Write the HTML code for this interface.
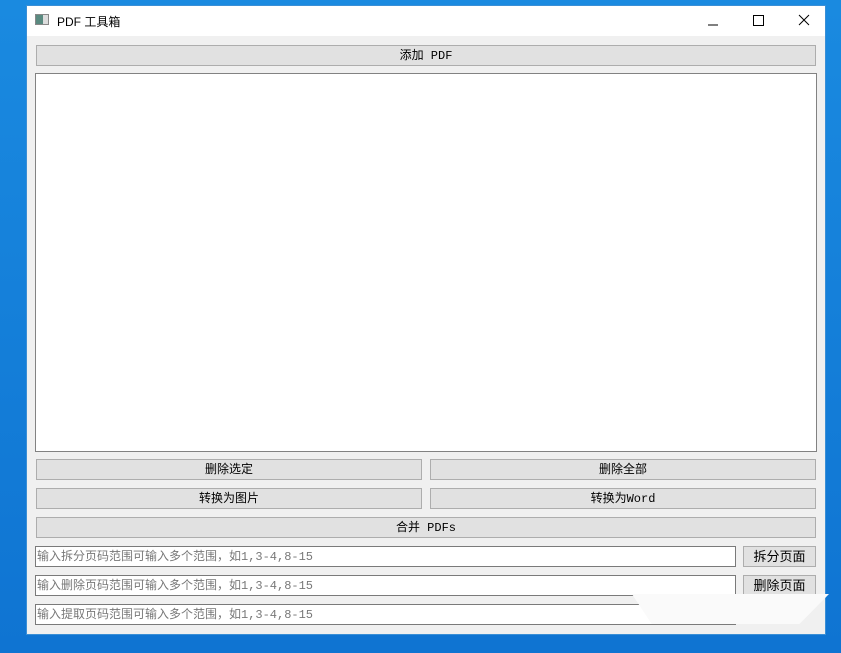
<!DOCTYPE html>
<html><head><meta charset="utf-8"><style>
*{box-sizing:border-box;margin:0;padding:0}
body{width:841px;height:653px;overflow:hidden;background:linear-gradient(180deg,#1a8ae0,#0f74d2);position:relative;font-family:"Liberation Sans","Noto Sans CJK SC",sans-serif;font-size:12px;color:#000}
.win{position:absolute;left:26px;top:5px;width:800px;height:630px;background:#f0f0f0;border:1px solid #3a8fd6}
.title{position:absolute;left:0;top:0;width:100%;height:30px;background:#fff}
.title .t{position:absolute;left:30px;top:7px;font-size:12px}
.ico{position:absolute;left:8px;top:8px;width:14px;height:11px;border:1px solid #888;background:linear-gradient(90deg,#5a8a80 0 60%,#ddd 60%)}
.ab{position:absolute;border:1px solid #adadad;background:#e1e1e1;text-align:center;line-height:21px;font-family:"Liberation Mono","Noto Sans CJK SC",monospace;font-size:12px}
.in{position:absolute;border:1px solid #7a7a7a;background:#fff;color:#787878;line-height:20px;padding-left:1px;font-family:"Liberation Mono","Noto Sans CJK SC",monospace;font-size:12px;white-space:nowrap;overflow:hidden}
</style></head><body>
<div class="win">
<div class="title"><div class="ico"></div><div class="t">PDF 工具箱</div>
<svg style="position:absolute;left:676px;top:7px" width="120" height="16"><line x1="5" y1="12" x2="15" y2="12" stroke="#000"/><rect x="50.5" y="2.5" width="10" height="10" fill="none" stroke="#000"/><path d="M96 2L106 12M106 2L96 12" stroke="#000"/></svg>
</div>
</div>
<div class="ab" style="left:36px;top:45px;width:780px;height:21px">添加 PDF</div>
<div style="position:absolute;left:35px;top:73px;width:782px;height:379px;background:#fff;border:1px solid #828282"></div>
<div class="ab" style="left:36px;top:459px;width:386px;height:21px">删除选定</div>
<div class="ab" style="left:430px;top:459px;width:386px;height:21px">删除全部</div>
<div class="ab" style="left:36px;top:488px;width:386px;height:21px">转换为图片</div>
<div class="ab" style="left:430px;top:488px;width:386px;height:21px">转换为Word</div>
<div class="ab" style="left:36px;top:517px;width:780px;height:21px">合并 PDFs</div>
<div class="in" style="left:35px;top:546px;width:701px;height:21px">输入拆分页码范围可输入多个范围，如1,3-4,8-15</div>
<div class="ab" style="left:743px;top:546px;width:73px;height:21px;font-size:13px">拆分页面</div>
<div class="in" style="left:35px;top:575px;width:701px;height:21px">输入删除页码范围可输入多个范围，如1,3-4,8-15</div>
<div class="ab" style="left:743px;top:575px;width:73px;height:21px;font-size:13px">删除页面</div>
<div class="in" style="left:35px;top:604px;width:701px;height:21px">输入提取页码范围可输入多个范围，如1,3-4,8-15</div>
<div style="position:absolute;left:632px;top:594px;width:197px;height:30px;background:#fafafa;clip-path:polygon(0 0,100% 0,85% 100%,10% 100%)"></div>
</body></html>
